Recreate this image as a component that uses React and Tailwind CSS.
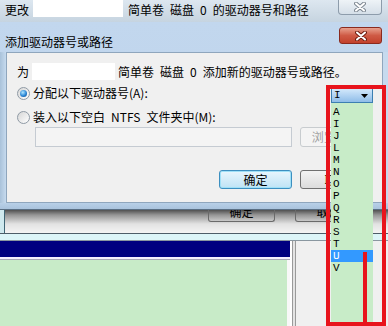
import React from 'react';

const letters = ['A', 'I', 'J', 'L', 'M', 'N', 'O', 'P', 'Q', 'R', 'S', 'T', 'U', 'V'];

function CloseX({ outline }) {
  return (
    <svg width="12" height="10" viewBox="0 0 12 10">
      <path d="M2 1.5 L10 8.5 M10 1.5 L2 8.5" stroke={outline} strokeWidth="4" strokeLinecap="round" fill="none" />
      <path d="M2 1.5 L10 8.5 M10 1.5 L2 8.5" stroke="#ffffff" strokeWidth="2" strokeLinecap="round" fill="none" />
    </svg>
  );
}

function Radio({ checked }) {
  return (
    <span className="w-[13px] h-[13px] rounded-full border border-[#8f9aa5] bg-gradient-to-br from-[#d6d6d6] to-[#ffffff] flex items-center justify-center shrink-0">
      {checked && (
        <span className="w-[7px] h-[7px] rounded-full bg-[radial-gradient(circle_at_40%_35%,#b0e6ff,#2a86d6_55%,#0d3f7a)]" />
      )}
    </span>
  );
}

export default function App() {
  return (
    <div className="relative w-[388px] h-[326px] overflow-hidden bg-[#f0f0f0] text-black text-[12px] leading-[16px] font-['Noto_Sans_CJK_SC','Noto_Sans',sans-serif]">
      {/* back window title bar */}
      <div className="h-[22px] flex items-start bg-gradient-to-b from-[#dde7f0] to-[#c6d4e0]">
        <span className="ml-[5px] mt-[2px]">更改</span>
        <span className="ml-[4px] w-[90px] h-[17px] bg-white" />
        <span className="ml-[5px] mt-[2px]">简单卷{'\u2002'}磁盘{'\u2002'}0{'\u2002'}的驱动器号和路径</span>
        <div className="ml-auto mr-[6px] w-[44px] h-[15px] rounded-b-[4px] border border-t-0 border-[#8d9cab] bg-gradient-to-b from-[#eef3f7] to-[#d5dfe8] flex items-center justify-center">
          <CloseX outline="#7d8791" />
        </div>
      </div>

      {/* front dialog */}
      <div className="h-[188px] flex flex-col bg-gradient-to-b from-[#c2d7ee] to-[#bcd2ea]">
        <div className="h-[30px] flex items-start">
          <span className="ml-[5px] mt-[12px]">添加驱动器号或路径</span>
          <div className="ml-auto mr-[6px] mt-[5px] w-[43px] h-[17px] rounded-[3px] border border-[#8a2a1e] bg-gradient-to-b from-[#e7a08e] via-[#cf5a45] to-[#c2412c] flex items-center justify-center">
            <CloseX outline="#6e1e12" />
          </div>
        </div>
        <div className="h-[151px] flex">
          <div className="w-[6px] bg-gradient-to-r from-[#a9c2da] to-[#c6daee]" />
          <div className="flex-1 border border-[#8fa6bd] bg-[#f0f0f0] pl-[10px] pr-[9px] pt-[10px] flex flex-col">
            <div className="h-[17px] flex items-center">
              <span>为</span>
              <span className="ml-[3px] w-[83px] h-[17px] bg-white" />
              <span className="ml-[3px]">简单卷{'\u2002'}磁盘{'\u2002'}0{'\u2002'}添加新的驱动器号或路径。</span>
            </div>
            <div className="mt-[5px] h-[16px] flex items-center">
              <Radio checked />
              <span className="ml-[3px]">分配以下驱动器号(A):</span>
              <div className="relative z-10 ml-auto self-start mt-[3px] w-[42px] h-[15px]">
                <div className="w-full h-full border border-[#3c7fb1] bg-gradient-to-b from-[#d3e8fb] to-[#8fbde8] flex items-center pl-[2px] font-['Liberation_Mono',monospace]">
                  <span className="text-[11px] leading-[13px]">I</span>
                  <svg className="ml-auto mr-[4px]" width="7" height="4" viewBox="0 0 7 4">
                    <path d="M0 0 H7 L3.5 4 Z" fill="#000" />
                  </svg>
                </div>
                <div className="absolute left-0 top-full w-[42px] h-[219px] bg-[#c8ecc8] pt-[3px] font-['Liberation_Mono',monospace] text-[11px]">
                  {letters.map((l) => (
                    <div
                      key={l}
                      className={l === 'U' ? 'h-[12px] leading-[12px] pl-[2px] bg-[#3399ff] text-white' : 'h-[12px] leading-[12px] pl-[2px]'}
                    >
                      {l}
                    </div>
                  ))}
                </div>
              </div>
            </div>
            <div className="mt-[8px] h-[16px] flex items-center">
              <Radio />
              <span className="ml-[3px]">装入以下空白{'\u2002'}NTFS{'\u2002'}文件夹中(M):</span>
            </div>
            <div className="mt-[2px] h-[20px] flex">
              <div className="ml-[18px] w-[257px] h-[20px] border border-[#c5cbd2] bg-[#f4f4f4]" />
              <div className="ml-[8px] w-[73px] h-[20px] rounded-[3px] border border-[#c8cccf] bg-[#f4f4f4] flex items-center justify-center text-[#a0a0a0]">
                浏览(R)...
              </div>
            </div>
            <div className="mt-[23px] h-[19px] flex justify-end gap-[8px]">
              <div className="w-[73px] h-[19px] rounded-[3px] border border-[#3c8fc0] shadow-[inset_0_0_0_1px_#9fe0f7] bg-gradient-to-b from-[#e8f6fd] to-[#bfe3f5] flex items-center justify-center">
                确定
              </div>
              <div className="w-[73px] h-[19px] rounded-[3px] border border-[#707070] bg-gradient-to-b from-[#f3f3f3] to-[#dcdcdc] flex items-center justify-center">
                取消
              </div>
            </div>
          </div>
          <div className="w-[5px] bg-[#c6daee]" />
        </div>
        <div className="h-[7px] bg-gradient-to-b from-[#b8d0e8] to-[#a9c3dd] border-b border-[#5a6f84]" />
      </div>

      {/* back window lower part */}
      <div className="h-[116px] flex flex-col">
        <div className="h-[24px] flex bg-[linear-gradient(to_bottom,#505050_0px,#969696_5px,#e2e2e2_14px,#f4f4f4_23px)] border-b border-[#4d5d68]">
          <div className="w-[5px] bg-[#cfe9ee] border-r border-[#3f6574]" />
          <div className="ml-[203px] w-[67px] h-[12px] rounded-b-[3px] border border-t-0 border-[#6a6a6a] overflow-hidden flex justify-center">
            <span className="-mt-[6px]">确定</span>
          </div>
          <div className="ml-[20px] w-[67px] h-[12px] rounded-b-[3px] border border-t-0 border-[#6a6a6a] overflow-hidden flex justify-center">
            <span className="-mt-[6px]">取消</span>
          </div>
        </div>
        <div className="h-[7px] bg-[#dcf5f8] border-b border-[#8a97a0]" />
        <div className="flex-1 flex">
          <div className="w-[290px] flex flex-col">
            <div className="h-[16px] bg-[#000080]" />
            <div className="h-[2px] bg-[#f4f0ff]" />
            <div className="h-[1px] bg-[#a8a8b8]" />
            <div className="flex-1 flex">
              <div className="flex-1 bg-[#c8ebc8]" />
              <div className="w-[3px] bg-[#f8f8f8]" />
            </div>
          </div>
          <div className="w-[2px] bg-[#ffffff]" />
          <div className="w-[4px] border-x border-[#9a9a9a] bg-[#e4e4e4]" />
          <div className="flex-1 bg-[#f0f0f0]" />
        </div>
      </div>

      {/* red annotation */}
      <div className="absolute z-20 left-[326px] top-[85px] w-[60px] h-[241px] border-[4px] border-[#e8141c]" />
      <div className="absolute z-20 left-[363px] top-[252px] w-[4px] h-[74px] bg-[#e8141c]" />
    </div>
  );
}
